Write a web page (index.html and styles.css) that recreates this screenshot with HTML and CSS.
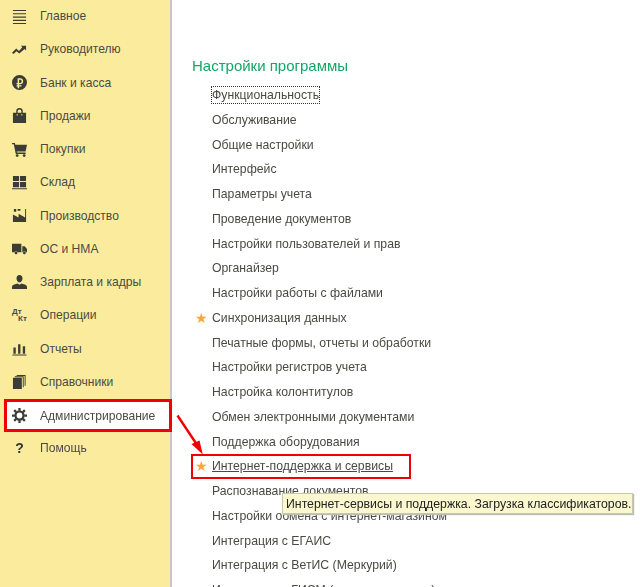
FILE: index.html
```html
<!DOCTYPE html>
<html lang="ru">
<head>
<meta charset="utf-8">
<title>Настройки программы</title>
<link rel="stylesheet" href="styles.css">
</head>
<body>
<div class="app">
  <nav class="side">
    <div class="nav"><svg class="ic" viewBox="0 0 16 16"><path d="M1 1h14v1.200H1zM1 4.500h14v1.200H1zM1 8h14v1.200H1zM1 11.500h14v1.200H1zM1 14.800h14V16H1z"/></svg><span>Главное</span></div>
    <div class="nav"><svg class="ic" viewBox="0 0 16 16"><path d="M0 11.500 4.500 7l3 2.500L11 5.500 9.500 4H15v5l-1.600-1.600L7.800 12.300l-3-2.500-3.300 3z"/></svg><span>Руководителю</span></div>
    <div class="nav"><svg class="ic" viewBox="0 0 16 16"><path fill-rule="evenodd" d="M8 0a8 8 0 1 1 0 16A8 8 0 0 1 8 0zM6 3.500v5H4.800v1.400H6v1H4.800v1.300H6V14h1.600v-1.800h2.600v-1.300H7.600V9.900h1.200c2 0 3.100-1.200 3.100-3.200S10.700 3.500 8.800 3.500zM7.600 5h1.200c1 0 1.500.6 1.500 1.700S9.800 8.500 8.800 8.500H7.600z"/></svg><span>Банк и касса</span></div>
    <div class="nav"><svg class="ic" viewBox="0 0 16 16"><path fill-rule="evenodd" d="M4.500 5V3.500a3.500 3.500 0 0 1 7 0V5H15v11H1V5zM6 5h4V3.500a2 2 0 0 0-4 0zM5 6.500v1.500h1V6.500zM10 6.500v1.500h1V6.500z"/></svg><span>Продажи</span></div>
    <div class="nav"><svg class="ic" viewBox="0 0 16 16"><path d="M0 1h3l.6 2H16l-1.500 7H5l.3 1.300H14.500v1.400H4L1.900 2.500H0z"/><circle cx="5.500" cy="14.500" r="1.500"/><circle cx="13" cy="14.500" r="1.500"/></svg><span>Покупки</span></div>
    <div class="nav"><svg class="ic" viewBox="0 0 16 16"><path d="M1 1h6.500v5.500H1zM8.500 1H15v5.500H8.500zM1 7.500h6.500V13H1zM8.500 7.500H15V13H8.500zM0 14h16v1.300H0z"/></svg><span>Склад</span></div>
    <div class="nav"><svg class="ic" viewBox="0 0 16 16"><path d="M2 1h2.500v3H2zM6 1h3v2H6zM1 7l6 3V6l7 4V1h1v14H1z"/></svg><span>Производство</span></div>
    <div class="nav"><svg class="ic" viewBox="0 0 16 16"><path d="M0 3h10v9H6a2 2 0 0 0-3.500 0H0zM11 5.500h2.500L16 8.500V12h-1a2 2 0 0 0-3.500 0H11z"/><circle cx="4.300" cy="12.700" r="1.500"/><circle cx="13.200" cy="12.700" r="1.500"/></svg><span>ОС и НМА</span></div>
    <div class="nav"><svg class="ic" viewBox="0 0 16 16"><path d="M8 0c2 0 3.200 1.500 3.200 3.500S10 8 8 8 4.800 5.500 4.800 3.500 6 0 8 0zM0 15v-2.500C0 10.500 4 9.500 6 9l2 1.500L10 9c2 .5 6 1.500 6 3.500V15z"/></svg><span>Зарплата и кадры</span></div>
    <div class="nav"><span class="ic dtkt"><span>Дт</span><span class="kt">Кт</span></span><span>Операции</span></div>
    <div class="nav"><svg class="ic" viewBox="0 0 16 16"><path d="M1.500 7h2.500v6.500H1.500zM6.500 3.500H9v10H6.500zM11.500 5.500H14v8h-2.500zM.5 14.300h15v1.200H.5z"/></svg><span>Отчеты</span></div>
    <div class="nav"><svg class="ic" viewBox="0 0 16 16"><path d="M1 4h9.500v12H1zM3 2.500h9.500V14h-1V3.500H3zM5 1h9.500v11.500h-1V2H5z"/></svg><span>Справочники</span></div>
    <div class="nav active"><svg class="ic gear" viewBox="0 0 16 16"><circle cx="8" cy="8" r="4.300"/><path d="M8 0v3M8 13v3M0 8h3M13 8h3M2.300 2.300l2.100 2.100M11.600 11.600l2.100 2.100M2.300 13.700l2.100-2.100M11.600 4.400l2.100-2.100"/></svg><span>Администрирование</span></div>
    <div class="nav"><span class="ic help">?</span><span>Помощь</span></div>
  </nav>
  <main class="content">
    <h1 class="title">Настройки программы</h1>
    <ul class="list">
      <li class="item"><span class="focus">Функциональность</span></li>
      <li class="item">Обслуживание</li>
      <li class="item">Общие настройки</li>
      <li class="item">Интерфейс</li>
      <li class="item">Параметры учета</li>
      <li class="item">Проведение документов</li>
      <li class="item">Настройки пользователей и прав</li>
      <li class="item">Органайзер</li>
      <li class="item">Настройки работы с файлами</li>
      <li class="item"><span class="star">★</span>Синхронизация данных</li>
      <li class="item">Печатные формы, отчеты и обработки</li>
      <li class="item">Настройки регистров учета</li>
      <li class="item">Настройка колонтитулов</li>
      <li class="item">Обмен электронными документами</li>
      <li class="item">Поддержка оборудования</li>
      <li class="item marked"><span class="star">★</span><u>Интернет-поддержка и сервисы</u></li>
      <li class="item">Распознавание документов</li>
      <li class="item">Настройки обмена с интернет-магазином</li>
      <li class="item">Интеграция с ЕГАИС</li>
      <li class="item">Интеграция с ВетИС (Меркурий)</li>
      <li class="item">Интеграция с ГИСМ (маркировка меха)</li>
    </ul>
  </main>
  <div class="tip">Интернет-сервисы и поддержка. Загрузка классификаторов.</div>
  <svg class="arrow" viewBox="0 0 30 44"><path class="arrow-line" d="M1.500 1.500 20.500 30"/><path class="arrow-head" d="M15.500 30 23.500 26.500 26.800 40.500z"/></svg>
</div>
</body>
</html>
```
FILE: styles.css
```css
html, body {
  margin: 0;
  height: 100%;
  overflow: hidden;
  background: #fff;
}
.app {
  position: relative;
  display: flex;
  width: 643px;
  height: 587px;
  overflow: hidden;
  font-family: "Liberation Sans", Arial, sans-serif;
  font-size: 12.100px;
  color: #4a4a44;
  filter: blur(0.25px);
}
.side {
  flex: none;
  width: 172px;
  height: 587px;
  box-sizing: border-box;
  background: #fbec9d;
  border-right: 2px solid #c8c8c0;
}
.nav {
  display: flex;
  align-items: center;
  gap: 13px;
  height: 33.250px;
  padding: 0 0 1px 12px;
  box-sizing: border-box;
  white-space: nowrap;
}
.ic {
  flex: none;
  width: 15px;
  height: 15px;
  fill: #3c3c36;
}
.gear {
  fill: none;
  stroke: #3c3c36;
  stroke-width: 2.400;
}
.nav.active {
  background: #fff;
  outline: 3px solid #f00000;
  outline-offset: -3px;
  margin-left: 4px;
  margin-right: -2px;
  padding: 0 0 0 8px;
  height: 33px;
}
.dtkt {
  display: flex;
  flex-direction: column;
  font-size: 8px;
  font-weight: bold;
  line-height: 7px;
}
.kt {
  padding-left: 6px;
}
.help {
  font-size: 14px;
  line-height: 15px;
  font-weight: bold;
  text-align: center;
  color: #333;
}
.content {
  flex: 1;
  padding: 57px 0 0 20px;
  min-width: 0;
}
.title {
  margin: 0;
  font-size: 15px;
  font-weight: normal;
  line-height: 18px;
  color: #10a866;
}
.list {
  list-style: none;
  margin: 8px 0 0;
  padding: 0 0 0 20px;
  font-size: 12.250px;
}
.item {
  position: relative;
  height: 24.750px;
  line-height: 24.750px;
  white-space: nowrap;
}
.focus {
  display: inline-block;
  line-height: 18px;
  margin-left: -1px;
  padding: 0 1px;
  outline: 1px dotted #333;
  outline-offset: -1px;
}
.star {
  position: absolute;
  left: -17px;
  top: 0;
  font-size: 14px;
  color: #f6a83a;
}
.marked::after {
  content: "";
  position: absolute;
  left: -21px;
  top: 0;
  width: 220px;
  height: 25px;
  box-sizing: border-box;
  border: 2px solid #f00000;
}
.tip {
  position: absolute;
  left: 282px;
  top: 493px;
  padding: 0 1px 0 3px;
  height: 21px;
  line-height: 20px;
  box-sizing: border-box;
  font-size: 12.300px;
  background: #fbf8cf;
  border: 1px solid #c8c8a8;
  box-shadow: 1px 1px 1px #bbb;
  color: #222;
  white-space: nowrap;
}
.arrow {
  position: absolute;
  left: 176px;
  top: 414px;
  width: 30px;
  height: 44px;
}
.arrow-line {
  fill: none;
  stroke: #f00000;
  stroke-width: 2.400;
}
.arrow-head {
  fill: #f00000;
}
```
